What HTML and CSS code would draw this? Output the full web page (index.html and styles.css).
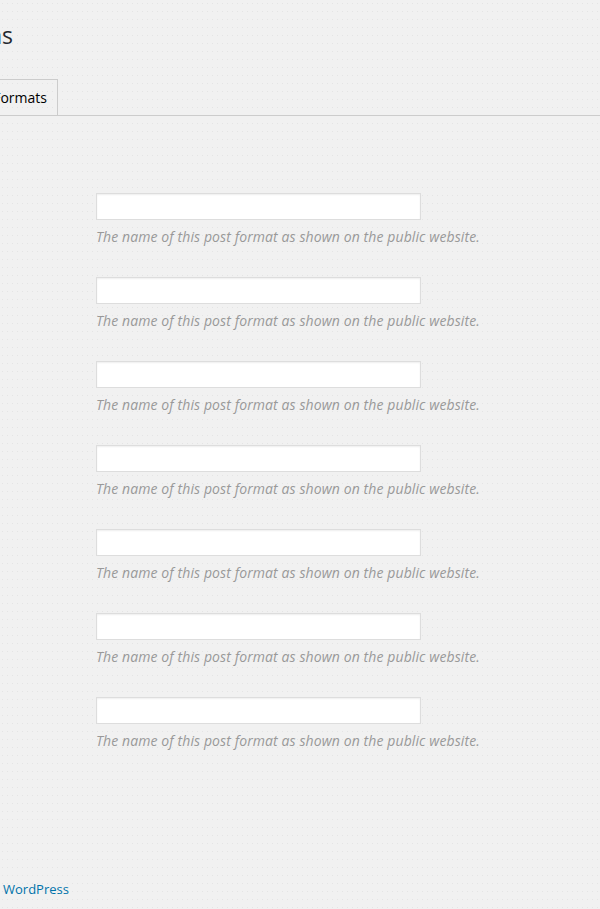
FILE: index.html
```html
<!DOCTYPE html>
<html lang="en">
<head>
<meta charset="utf-8">
<title>Post Formats</title>
<link rel="stylesheet" href="styles.css">
</head>
<body>
<div class="page">
  <h1 class="title"><span class="clip"><span class="inner">Post Format Options</span></span></h1>
  <div class="tabs">
    <a class="tab"><span class="clip tab-clip"><span class="inner">Post Formats</span></span></a>
  </div>
  <div class="fields">
    <div class="field"><input class="text" type="text"><p class="description">The name of this post format as shown on the public website.</p></div>
    <div class="field"><input class="text" type="text"><p class="description">The name of this post format as shown on the public website.</p></div>
    <div class="field"><input class="text" type="text"><p class="description">The name of this post format as shown on the public website.</p></div>
    <div class="field"><input class="text" type="text"><p class="description">The name of this post format as shown on the public website.</p></div>
    <div class="field"><input class="text" type="text"><p class="description">The name of this post format as shown on the public website.</p></div>
    <div class="field"><input class="text" type="text"><p class="description">The name of this post format as shown on the public website.</p></div>
    <div class="field"><input class="text" type="text"><p class="description">The name of this post format as shown on the public website.</p></div>
  </div>
  <div class="footer"><span class="clip foot-clip"><span class="inner">Thank you for creating with</span></span><a class="wp-link" href="#">WordPress</a></div>
</div>
</body>
</html>
```
FILE: styles.css
```css
html, body {
  margin: 0;
  padding: 0;
}
body {
  width: 600px;
  height: 909px;
  overflow: hidden;
  background-color: #f1f1f1;
  background-image: url("data:image/svg+xml,%3Csvg xmlns='http://www.w3.org/2000/svg' width='5' height='8'%3E%3Crect x='2' y='3' width='1' height='1' fill='%23e4e4e4'/%3E%3C/svg%3E");
  font-family: "Open Sans", "Liberation Sans", sans-serif;
  color: #23282d;
}
.page {
  display: flex;
  flex-direction: column;
}
.clip {
  display: block;
  direction: rtl;
  white-space: nowrap;
}
.clip .inner {
  direction: ltr;
  unicode-bidi: isolate;
}
.title {
  margin: 0;
  padding-top: 21px;
  font-size: 23px;
  font-weight: 400;
  line-height: 29px;
  height: 29px;
}
.title .clip {
  width: 13px;
}
.tabs {
  margin-top: 29px;
  height: 36px;
  border-bottom: 1px solid #ccc;
  display: flex;
}
.tab {
  display: block;
  border: 1px solid #ccc;
  border-left: none;
  border-bottom: none;
  background: transparent;
  padding: 6px 10px 6px 0;
  height: 24px;
  font-size: 14px;
  line-height: 24px;
  font-weight: 400;
  color: #000;
}
.tab-clip {
  width: 47px;
}
.fields {
  padding-left: 96px;
  padding-top: 77px;
  display: flex;
  flex-direction: column;
}
.field {
  height: 84px;
}
.text {
  display: block;
  box-sizing: border-box;
  width: 325px;
  height: 27px;
  margin: 0;
  padding: 3px 5px;
  background: #fff;
  border: 1px solid #ddd;
  box-shadow: inset 0 1px 2px rgba(0,0,0,0.07);
  font: 14px "Open Sans", sans-serif;
  outline: none;
}
.description {
  margin: 6px 0 0 0;
  font-size: 14px;
  line-height: 21px;
  font-style: italic;
  letter-spacing: 0.1px;
  color: #999;
}
.footer {
  margin-top: 99px;
  display: flex;
  font-size: 13px;
  line-height: 19px;
  color: #555d66;
}
.foot-clip {
  width: 0;
}
.wp-link {
  padding-left: 3px;
  color: #0073aa;
  text-decoration: none;
}
```
